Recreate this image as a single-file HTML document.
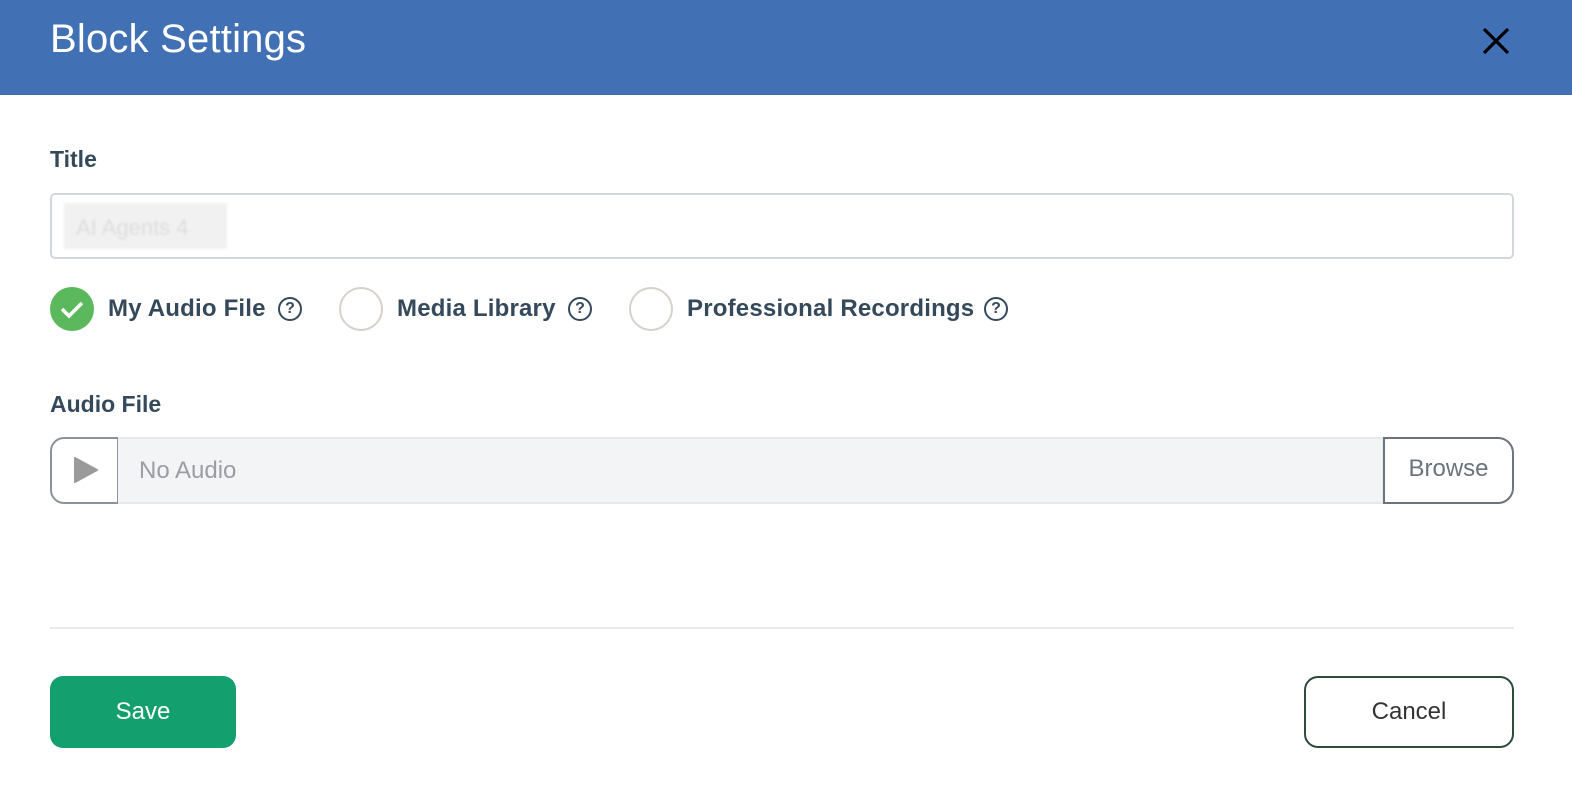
<!DOCTYPE html>
<html><head><meta charset="utf-8"><style>
*{box-sizing:border-box;margin:0;padding:0}
body{width:1572px;height:788px;background:#fff;font-family:"Liberation Sans",Arial,sans-serif;position:relative;overflow:hidden;color:#35495b}
.hdr{position:absolute;left:0;top:0;width:1572px;height:95px;background:#4170b4}
.hdr h1{position:absolute;left:50px;top:17px;font-size:40px;font-weight:400;color:#fff;letter-spacing:0.2px}
.x{position:absolute;left:1482px;top:27px}
.lbl{position:absolute;left:50px;font-size:23px;font-weight:700;color:#35495b}
.inp{position:absolute;left:50px;top:193px;width:1464px;height:66px;border:2px solid #d3d7dc;border-radius:5px}
.blur{position:absolute;left:12px;top:8px;width:163px;height:46px;background:#f1f1f1;color:#ddd;font-size:22px;padding:12px;filter:blur(1px)}
.rad{position:absolute;top:287px;width:44px;height:44px;border-radius:50%;border:2px solid #d5d2cb}
.rt{position:absolute;top:295px;font-size:24px;font-weight:700;color:#35495b;letter-spacing:0.2px}
.q{position:absolute;top:297px;width:24px;height:24px;border:2.5px solid #35495b;border-radius:50%;font-size:16px;font-weight:700;text-align:center;line-height:19px}
.play{position:absolute;left:50px;top:437px;width:69px;height:67px;border:2px solid #8d9296;border-radius:14px 0 0 14px;background:#fff}
.fld{position:absolute;left:118px;top:437px;width:1266px;height:67px;background:#f3f4f6;border:2px solid #e6e8eb;border-left:none;font-size:24px;color:#9a9ea3;padding:18px 0 0 21px}
.br{position:absolute;left:1383px;top:437px;width:131px;height:67px;border:2px solid #6b737b;border-radius:0 16px 16px 0;font-size:24px;color:#6b737b;text-align:center;line-height:60px}
.div{position:absolute;left:50px;top:627px;width:1464px;height:2px;background:#e8eaec}
.save{position:absolute;left:50px;top:676px;width:186px;height:72px;background:#13a06e;border-radius:13px;color:#fff;font-size:24px;text-align:center;line-height:72px}
.cancel{position:absolute;left:1304px;top:676px;width:210px;height:72px;border:2px solid #2e4a3b;border-radius:14px;color:#333;font-size:24px;text-align:center;line-height:68px}
</style></head><body>
<div class="hdr"><h1>Block Settings</h1>
<svg class="x" width="28" height="28" viewBox="0 0 28 28"><path d="M2 2L26 26M26 2L2 26" stroke="#000" stroke-width="3.2"/></svg></div>
<div class="lbl" style="top:146px">Title</div>
<div class="inp"><div class="blur">AI Agents 4</div></div>
<svg style="position:absolute;left:50px;top:287px" width="44" height="44"><circle cx="22" cy="22" r="22" fill="#5cb85c"/><path d="M12 22l7 7 13-13" stroke="#fff" stroke-width="3.5" fill="none"/></svg>
<div class="rt" style="left:108px">My Audio File</div><div class="q" style="left:278px">?</div>
<div class="rad" style="left:339px"></div>
<div class="rt" style="left:397px">Media Library</div><div class="q" style="left:568px">?</div>
<div class="rad" style="left:629px"></div>
<div class="rt" style="left:687px">Professional Recordings</div><div class="q" style="left:984px">?</div>
<div class="lbl" style="top:391px">Audio File</div>
<div class="play"><svg style="position:absolute;left:21px;top:17px" width="26" height="28"><path d="M2 2L24 14L2 26Z" fill="#9a9a9a" stroke="#9a9a9a" stroke-width="2" stroke-linejoin="round"/></svg></div>
<div class="fld">No Audio</div>
<div class="br">Browse</div>
<div class="div"></div>
<div class="save">Save</div>
<div class="cancel">Cancel</div>
</body></html>
